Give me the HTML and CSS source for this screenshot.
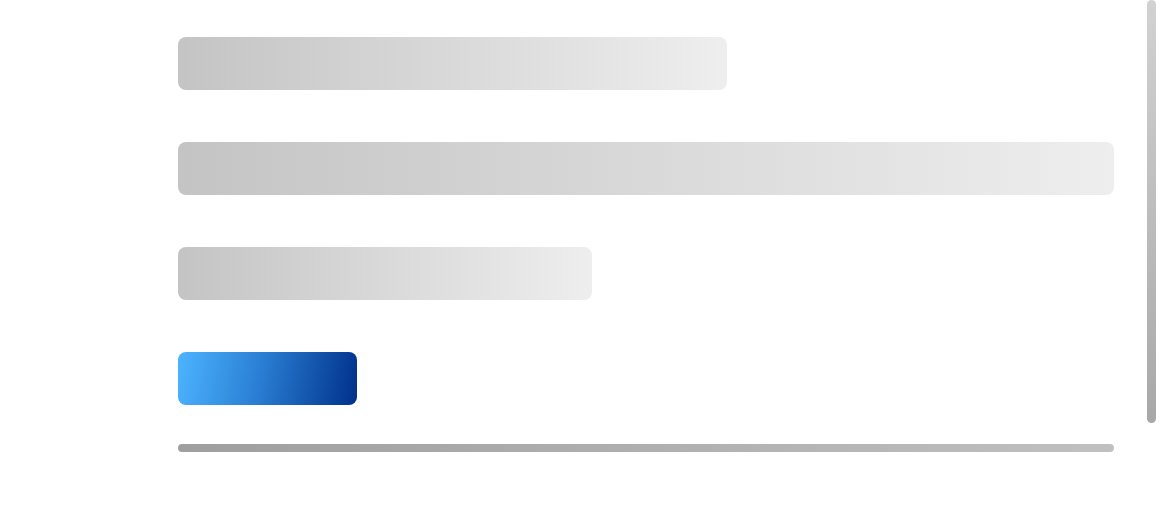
FILE: index.html
```html
<!DOCTYPE html>
<html>
<head>
<meta charset="utf-8">
<link rel="stylesheet" href="styles.css">
</head>
<body>
<div class="page">
  <div class="content">
    <div class="bars">
      <div class="bar gray" style="width:549px"></div>
      <div class="bar gray" style="width:936px"></div>
      <div class="bar gray" style="width:414px"></div>
      <div class="bar blue" style="width:179px"></div>
    </div>
    <div class="hscroll"></div>
  </div>
  <div class="vscroll"></div>
</div>
</body>
</html>
```
FILE: styles.css
```css
html, body {
  margin: 0;
  padding: 0;
  background: #ffffff;
  font-family: "Liberation Sans", Arial, sans-serif;
}
.page {
  display: flex;
  align-items: flex-start;
  padding-left: 178px;
}
.content {
  width: 936px;
  padding-top: 37px;
  display: flex;
  flex-direction: column;
}
.bars {
  display: flex;
  flex-direction: column;
  gap: 52px;
}
.bar {
  height: 53px;
  border-radius: 8px;
}
.gray {
  background: linear-gradient(to right, #c4c4c4, #eeeeee);
}
.blue {
  background: linear-gradient(100deg, #4db4ff 0%, #2a7fd4 45%, #00308a 100%);
}
.hscroll {
  margin-top: 39px;
  height: 8px;
  border-radius: 4px;
  background: linear-gradient(to right, #9f9f9f, #c0c0c0);
}
.vscroll {
  margin-left: 33px;
  width: 9px;
  height: 423px;
  border-radius: 5px;
  background: linear-gradient(to bottom, #d2d2d2, #a8a8a8);
}
```
